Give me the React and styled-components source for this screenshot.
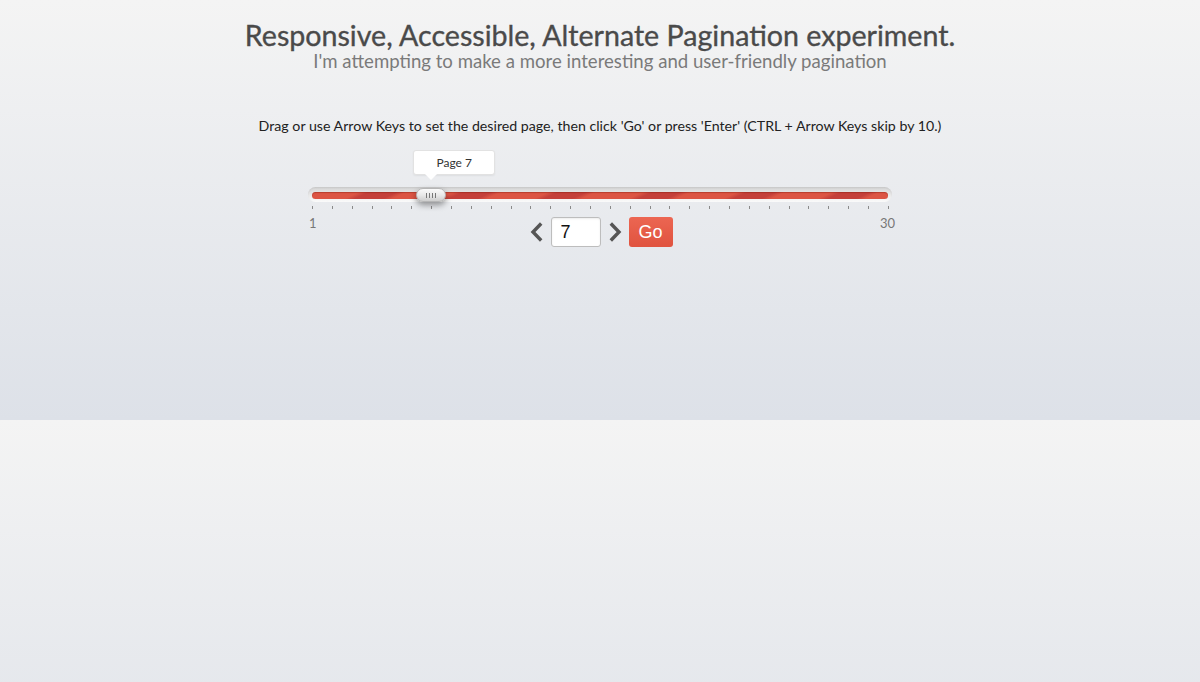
import React from "react";
import styled, { createGlobalStyle } from "styled-components";

const Global = createGlobalStyle`
  html {
    background: linear-gradient(to bottom, #f4f4f4 0%, #dde1e8 100%);
    background-size: 100% 420px;
    background-repeat: repeat;
    min-height: 100%;
  }
  body {
    margin: 0;
    font-family: Lato, "Open Sans", sans-serif;
    color: #444;
  }
`;

const Page = styled.div`
  display: flex;
  flex-direction: column;
  align-items: center;
  padding-top: 19px;
`;

const Title = styled.h1`
  margin: 0;
  font-size: 28.6px;
  font-weight: 400;
  color: #4a4a4a;
  line-height: 32px;
  -webkit-text-stroke: 0.35px #4a4a4a;
`;

const Subtitle = styled.h2`
  margin: 0;
  font-size: 18.6px;
  font-weight: 400;
  color: #7a7a7a;
  line-height: 20px;
`;

const Instructions = styled.p`
  margin: 46px 0 0;
  font-size: 14.2px;
  color: #222;
  line-height: 18px;
`;

const SliderArea = styled.div`
  position: relative;
  width: 584px;
  margin-top: 15px;
  padding-top: 37px;
`;

const Tooltip = styled.div`
  position: absolute;
  top: 0;
  left: ${(p) => p.$left}px;
  width: 80px;
  height: 23px;
  background: #fff;
  border: 1px solid #e2e2e2;
  border-radius: 3px;
  box-shadow: 0 1px 2px rgba(0, 0, 0, 0.06);
  font-size: 12px;
  color: #333;
  display: flex;
  align-items: center;
  justify-content: center;
  &::after {
    content: "";
    position: absolute;
    left: 11px;
    bottom: -6px;
    border-left: 6px solid transparent;
    border-right: 6px solid transparent;
    border-top: 6px solid #fff;
  }
`;

const Track = styled.div`
  position: relative;
  height: 15px;
  border-radius: 8px;
  background: linear-gradient(to bottom, #d6d6d6 0%, #e6e6e6 45%, #fbfbfb 100%);
  box-shadow: inset 0 1px 2px rgba(0, 0, 0, 0.08);
  display: flex;
  align-items: center;
  padding: 0 4px;
`;

const Fill = styled.div`
  flex: 1;
  height: 7px;
  margin-top: 1px;
  border-radius: 4px;
  background: repeating-linear-gradient(
    155deg,
    #dc5544 0px,
    #dc5544 20px,
    #c4403a 24px,
    #c4403a 36px,
    #dc5544 40px
  );
  box-shadow: inset 0 1px 1px rgba(120, 20, 10, 0.35);
`;

const Thumb = styled.div`
  position: absolute;
  top: 1px;
  left: ${(p) => p.$left}px;
  width: 30px;
  height: 14px;
  border-radius: 7px;
  background: linear-gradient(to bottom, #fafafa 0%, #e9e9e9 50%, #cdcdcd 100%);
  border: 1px solid #b5b5b5;
  box-sizing: border-box;
  box-shadow: 0 3px 6px rgba(0, 0, 0, 0.4);
  display: flex;
  align-items: center;
  justify-content: center;
  gap: 2px;
`;

const Grip = styled.span`
  width: 1px;
  height: 5px;
  background: #777;
`;

const Ticks = styled.div`
  display: flex;
  justify-content: space-between;
  padding: 0 3px 0 4px;
  margin-top: 4px;
`;

const Tick = styled.span`
  width: 1px;
  height: 3px;
  background: #8a8a8a;
`;

const Labels = styled.div`
  display: flex;
  justify-content: space-between;
  margin: 7px -3px 0 1px;
  font-size: 13px;
  color: #777;
  line-height: 15px;
`;

const Nav = styled.div`
  display: flex;
  align-items: center;
  gap: 8px;
  margin-top: -14px;
  padding-left: 2px;
`;

const Arrow = styled.button`
  border: 0;
  background: none;
  padding: 0;
  width: 13px;
  height: 22px;
  display: flex;
  align-items: center;
  justify-content: center;
  cursor: pointer;
`;

const PageInput = styled.input`
  width: 50px;
  height: 30px;
  box-sizing: border-box;
  border: 1px solid #bdbdbd;
  border-radius: 3px;
  background: #fff;
  font-family: "Liberation Sans", Arial, sans-serif;
  font-size: 18px;
  color: #111;
  padding: 0 0 0 9px;
  box-shadow: inset 0 1px 2px rgba(0, 0, 0, 0.08);
`;

const GoButton = styled.button`
  width: 44px;
  height: 30px;
  margin-left: -1px;
  border: 0;
  border-radius: 3px;
  background: linear-gradient(to bottom, #ec6652 0%, #e0533f 100%);
  color: #fff;
  font-family: "Liberation Sans", Arial, sans-serif;
  font-size: 18px;
  padding: 0;
  cursor: pointer;
`;

const Chevron = ({ dir }) => (
  <svg width="13" height="22" viewBox="0 0 13 22">
    <path
      d={dir === "left" ? "M11.2 2.5 L3 11 L11.2 19.5" : "M1.8 2.5 L10 11 L1.8 19.5"}
      fill="none"
      stroke="#555"
      strokeWidth="3.4"
      strokeLinecap="butt"
      strokeLinejoin="miter"
    />
  </svg>
);

export default function App() {
  const total = 30;
  const page = 7;
  const step = 576 / (total - 1);
  const thumbLeft = 4 + (page - 1) * step - 15;
  return (
    <>
      <Global />
      <Page>
        <Title>Responsive, Accessible, Alternate Pagination experiment.</Title>
        <Subtitle>I'm attempting to make a more interesting and user-friendly pagination</Subtitle>
        <Instructions>
          Drag or use Arrow Keys to set the desired page, then click 'Go' or press 'Enter' (CTRL + Arrow Keys skip by 10.)
        </Instructions>
        <SliderArea>
          <Tooltip $left={thumbLeft - 3}>Page {page}</Tooltip>
          <Track>
            <Fill />
            <Thumb $left={thumbLeft}>
              <Grip />
              <Grip />
              <Grip />
              <Grip />
            </Thumb>
          </Track>
          <Ticks>
            {Array.from({ length: total }).map((_, i) => (
              <Tick key={i} />
            ))}
          </Ticks>
          <Labels>
            <span>1</span>
            <span>30</span>
          </Labels>
        </SliderArea>
        <Nav>
          <Arrow aria-label="Previous page">
            <Chevron dir="left" />
          </Arrow>
          <PageInput defaultValue={page} aria-label="Page number" />
          <Arrow aria-label="Next page">
            <Chevron dir="right" />
          </Arrow>
          <GoButton>Go</GoButton>
        </Nav>
      </Page>
    </>
  );
}
